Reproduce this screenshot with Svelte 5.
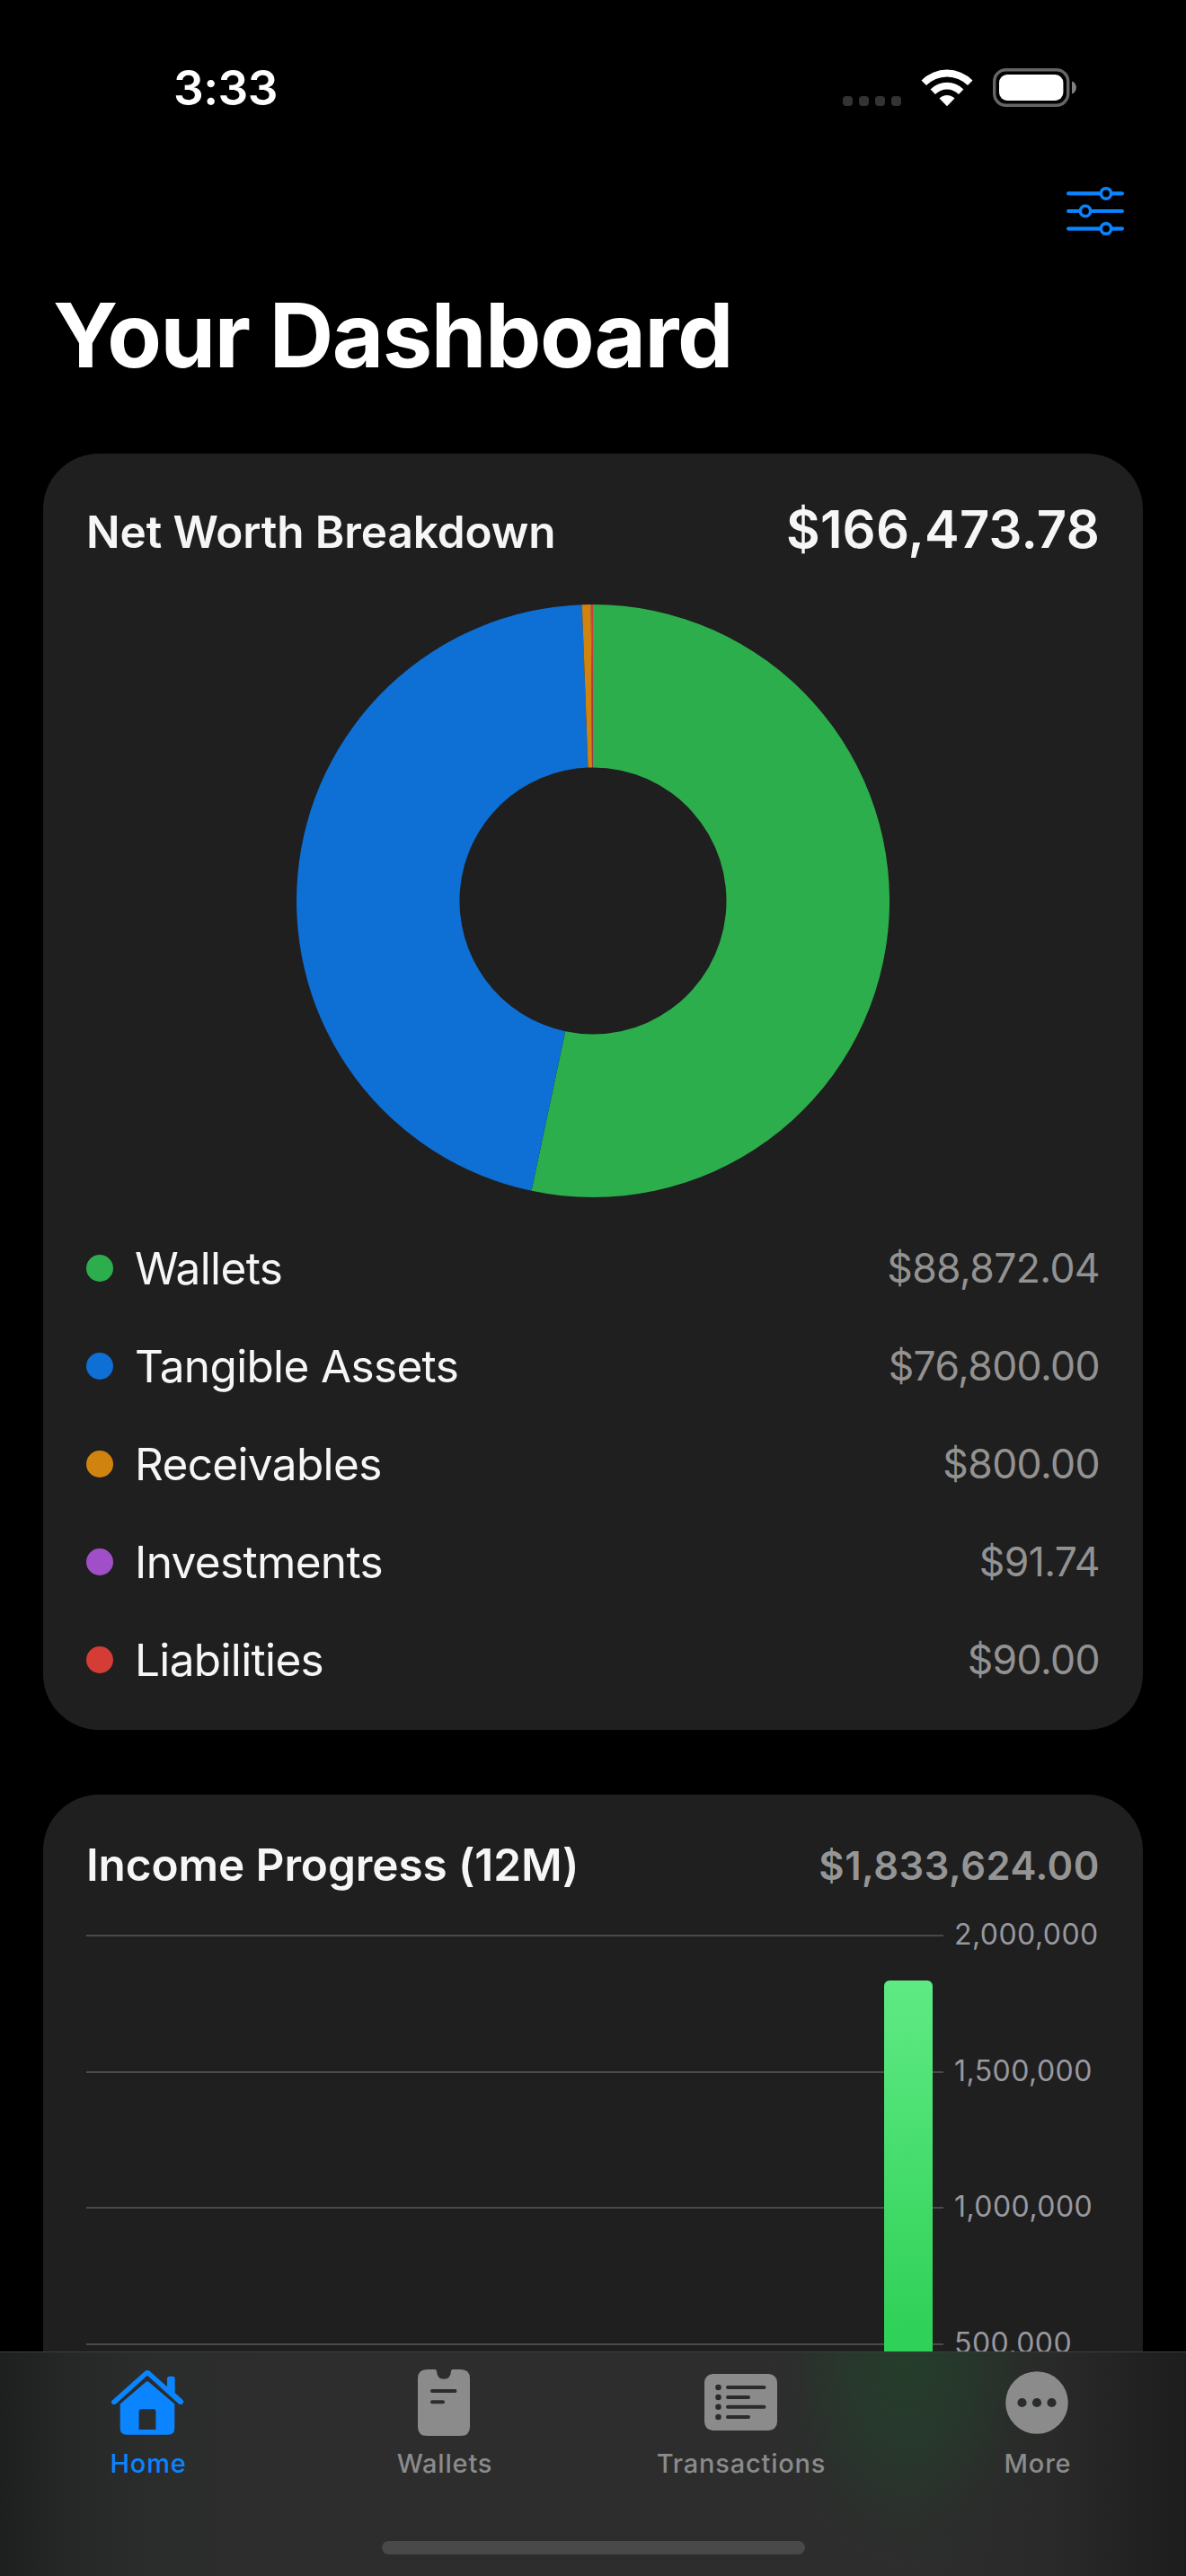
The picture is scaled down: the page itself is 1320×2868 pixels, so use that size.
<script>
  const slices = [
    { name: "Wallets", value: 88872.04, color: "#2dae4c" },
    { name: "Tangible Assets", value: 76800, color: "#0e6fd4" },
    { name: "Receivables", value: 800, color: "#d0830f" },
    { name: "Investments", value: 91.74, color: "#a04fc9" },
    { name: "Liabilities", value: 90, color: "#d33d36" },
  ];

  const income = 1833624;
  const axisMax = 2000000;
  const ticks = [2000000, 1500000, 1000000, 500000, 0];
  // only the last month has income
  const months = [0, 0, 0, 0, 0, 0, 0, 0, 0, 0, 0, income];

  const tabs = [
    { id: "home", label: "Home" },
    { id: "wallets", label: "Wallets" },
    { id: "transactions", label: "Transactions" },
    { id: "more", label: "More" },
  ];
  let active = $state("home");

  const money = (n) =>
    "$" + n.toLocaleString("en-US", { minimumFractionDigits: 2, maximumFractionDigits: 2 });

  const OUTER = 330;
  const INNER = 148.5;

  function point(r, angle) {
    return `${(OUTER + r * Math.sin(angle)).toFixed(2)} ${(OUTER - r * Math.cos(angle)).toFixed(2)}`;
  }

  function buildArcs(items) {
    const total = items.reduce((sum, s) => sum + s.value, 0);
    let start = 0;
    return items.map((s) => {
      const end = start + (s.value / total) * Math.PI * 2;
      const large = end - start > Math.PI ? 1 : 0;
      const d =
        `M${point(OUTER, start)} A${OUTER} ${OUTER} 0 ${large} 1 ${point(OUTER, end)} ` +
        `L${point(INNER, end)} A${INNER} ${INNER} 0 ${large} 0 ${point(INNER, start)} Z`;
      start = end;
      return { d, color: s.color };
    });
  }

  const arcs = buildArcs(slices);
</script>

<div class="screen">
  <div class="status">
    <span class="time">3:33</span>
    <div class="indicators">
      <div class="signal"><i></i><i></i><i></i><i></i></div>
      <svg class="wifi" width="58" height="43" viewBox="0 0 58 43">
        <path d="M0.5 13.5 A40 40 0 0 1 57.5 13.5 L52 19 A32.3 32.3 0 0 0 6 19 Z" fill="#fff" />
        <path d="M10.6 23.5 A26 26 0 0 1 47.4 23.5 L42 29 A18.4 18.4 0 0 0 16 29 Z" fill="#fff" />
        <path d="M20.5 33.5 A12 12 0 0 1 37.5 33.5 L29 42.2 Z" fill="#fff" />
      </svg>
      <svg class="battery" width="94" height="43" viewBox="0 0 94 43">
        <rect x="1.7" y="1.7" width="82" height="39.6" rx="13" fill="none" stroke="#666" stroke-width="3.4" />
        <rect x="7" y="7" width="71.4" height="29" rx="9" fill="#fff" />
        <path d="M88 14.5 C94.5 16.5 94.5 26.5 88 28.5 Z" fill="#808080" />
      </svg>
    </div>
  </div>

  <div class="toolbar">
    <svg width="64" height="56" viewBox="0 0 64 56" fill="none" stroke="#0a84ff" stroke-width="4.2" stroke-linecap="round">
      <path d="M2.1 8.4 H37 M51 8.4 H61.9 M2.1 28 H14 M28 28 H61.9 M2.1 47.6 H37 M51 47.6 H61.9" />
      <g stroke-width="3.6">
        <circle cx="44" cy="8.4" r="5.7" />
        <circle cx="21" cy="28" r="5.7" />
        <circle cx="44" cy="47.6" r="5.7" />
      </g>
    </svg>
  </div>

  <h1>Your Dashboard</h1>

  <main>
    <section class="card">
      <header class="worth">
        <h2>Net Worth Breakdown</h2>
        <strong>$166,473.78</strong>
      </header>

      <svg class="donut" width="660" height="660" viewBox="0 0 660 660">
        {#each arcs as arc}
          <path d={arc.d} fill={arc.color} />
        {/each}
      </svg>

      <ul>
        {#each slices as s}
          <li>
            <i class="dot" style="background: {s.color}"></i>
            <span class="name">{s.name}</span>
            <span class="amount">{money(s.value)}</span>
          </li>
        {/each}
      </ul>
    </section>

    <section class="card">
      <header>
        <h2>Income Progress (12M)</h2>
        <span class="total">{money(income)}</span>
      </header>

      <div class="chart">
        <div class="plot">
          {#each ticks as t}
            <div class="line"></div>
          {/each}
          <div class="bars">
            {#each months as m}
              <div class="bar" style="height: {(m / axisMax) * 100}%"></div>
            {/each}
          </div>
        </div>
        <div class="axis">
          {#each ticks as t}
            <span>{t.toLocaleString("en-US")}</span>
          {/each}
        </div>
      </div>
    </section>
  </main>

  <nav>
    <div class="tabs">
      {#each tabs as tab}
        <button class:active={active === tab.id} onclick={() => (active = tab.id)}>
          {#if tab.id === "home"}
            <svg width="82" height="76" viewBox="0 0 82 76" fill="currentColor">
              <path d="M3 34.5 L38 3.3 Q41 0.7 44 3.3 L63 20.2 V11.5 Q63 8.7 65.6 8.7 H69 Q71.7 8.7 71.7 11.5 V27 L80 34.5 Q82.5 37 80.2 39.2 Q78 41 75.5 39 L41 7.8 L6.5 39 Q4 41 1.8 39.2 Q-0.5 37 3 34.5 Z" />
              <path fill-rule="evenodd" d="M39 15.3 Q41 13.4 43 15.3 L71.3 39.5 V66.5 Q71.3 73.7 64 73.7 H18 Q10.7 73.7 10.7 66.5 V39.5 Z M34 45.3 Q31.6 45.3 31.6 47.7 V68 H50.4 V47.7 Q50.4 45.3 48 45.3 Z" />
            </svg>
          {:else if tab.id === "wallets"}
            <svg width="58" height="76" viewBox="0 0 58 76" fill="currentColor">
              <path fill-rule="evenodd" d="M10.5 1 H19 Q21 1 21 3 Q21.5 11.7 29 11.7 Q36.5 11.7 37 3 Q37 1 39 1 H47.5 Q58 1 58 11 V65 Q58 75 47.5 75 H10.5 Q0 75 0 65 V11 Q0 1 10.5 1 Z M16 23 A2 2 0 0 0 16 27 H41.5 A2 2 0 0 0 41.5 23 Z M16 35.3 A2 2 0 0 0 16 39.3 H28 A2 2 0 0 0 28 35.3 Z" />
            </svg>
          {:else if tab.id === "transactions"}
            <svg width="81" height="76" viewBox="0 0 81 76">
              <rect y="6" width="81" height="63" rx="9.5" fill="currentColor" />
              <g fill="#2b2b2b">
                {#each [21, 32, 42.8, 54] as y, i}
                  <circle cx="15.5" cy={y} r="3.3" />
                  <rect x="24" y={y - 2} width={i % 2 ? 27 : 44.5} height="4" rx="2" />
                {/each}
              </g>
            </svg>
          {:else}
            <svg width="70" height="76" viewBox="0 0 70 76">
              <circle cx="35" cy="38" r="34.8" fill="currentColor" />
              <g fill="#2a2e2b">
                <circle cx="18.5" cy="38" r="5.1" />
                <circle cx="35" cy="38" r="5.1" />
                <circle cx="51.5" cy="38" r="5.1" />
              </g>
            </svg>
          {/if}
          <span>{tab.label}</span>
        </button>
      {/each}
    </div>
    <div class="grabber"></div>
  </nav>
</div>

<style>
  :global(body) {
    margin: 0;
    background: #000;
  }

  .screen {
    position: relative;
    display: flex;
    flex-direction: column;
    width: 1320px;
    height: 2868px;
    overflow: hidden;
    background: #000;
    color: #f6f6f6;
    font-family: Inter, "Liberation Sans", sans-serif;
  }

  .status {
    flex: none;
    height: 195px;
    box-sizing: border-box;
    padding: 0 121px 0 193px;
    display: flex;
    align-items: center;
    justify-content: space-between;
  }

  .time {
    color: #fff;
    font-size: 53px;
    font-weight: 600;
    letter-spacing: -0.5px;
  }

  .indicators {
    display: flex;
    align-items: flex-end;
    margin-bottom: 1px;
  }

  .signal {
    display: flex;
    gap: 7px;
    margin: 0 22px 1px 0;
  }

  .signal i {
    width: 11px;
    height: 11px;
    border-radius: 4px;
    background: #333;
  }

  .wifi {
    margin-right: 22px;
  }

  .toolbar {
    flex: none;
    height: 80px;
    padding: 0 69px;
    display: flex;
    align-items: center;
    justify-content: flex-end;
  }

  h1 {
    flex: none;
    margin: 38px 59px 72px;
    color: #fff;
    font-size: 99px;
    line-height: 120px;
    font-weight: 700;
    letter-spacing: -1.4px;
  }

  main {
    display: flex;
    flex-direction: column;
    gap: 72px;
    padding: 0 48px;
  }

  .card {
    display: flex;
    flex-direction: column;
    padding: 48px;
    border-radius: 62px;
    background: #1f1f1f;
  }

  header {
    display: flex;
    align-items: center;
    justify-content: space-between;
    height: 61px;
  }

  header.worth {
    align-items: baseline;
    height: 72px;
    margin-bottom: 48px;
  }

  h2 {
    margin: 0;
    font-size: 49.5px;
    line-height: 61px;
    font-weight: 600;
    letter-spacing: -0.1px;
  }

  strong {
    font-size: 58px;
    line-height: 72px;
    font-weight: 600;
    letter-spacing: 0.2px;
  }

  .total {
    color: #959595;
    font-size: 43.5px;
    font-weight: 600;
    letter-spacing: 0.5px;
  }

  .donut {
    align-self: center;
    margin-bottom: 48px;
  }

  ul {
    list-style: none;
    margin: 0;
    padding: 0;
    display: flex;
    flex-direction: column;
    gap: 48px;
  }

  li {
    display: flex;
    align-items: center;
    height: 61px;
  }

  .dot {
    width: 30px;
    height: 30px;
    margin-right: 24px;
    border-radius: 50%;
  }

  .name {
    flex: 1;
    font-size: 49.5px;
    letter-spacing: -0.65px;
  }

  .amount {
    color: #929292;
    font-size: 44.5px;
    letter-spacing: -0.6px;
  }

  .chart {
    display: flex;
    gap: 12px;
    height: 608px;
    margin-top: 47px;
  }

  .plot {
    position: relative;
    width: 954px;
    display: flex;
    flex-direction: column;
    justify-content: space-between;
  }

  .line {
    height: 2px;
    background: #4a4a4b;
  }

  /* bars sit on top of the grid lines */
  .bars {
    position: absolute;
    inset: 1px 12px 1px 0;
    display: grid;
    grid-template-columns: repeat(12, 54px);
    justify-content: space-between;
    align-items: end;
  }

  .bar {
    border-radius: 6px 6px 0 0;
    background: linear-gradient(#5fea84, #30d158 70%);
  }

  .axis {
    display: flex;
    flex-direction: column;
    justify-content: space-between;
    margin: -20px 0 -18px;
    color: #98989f;
    font-size: 32px;
    line-height: 40px;
    letter-spacing: 0.45px;
  }

  nav {
    position: absolute;
    left: 0;
    right: 0;
    bottom: 0;
    height: 249px;
    border-top: 1px solid #3d3d3d;
    background:
      radial-gradient(ellipse 170px 250px at 1010px 10px, rgba(32, 72, 42, 0.6), rgba(32, 70, 43, 0.42) 40%, rgba(38, 54, 42, 0.15) 75%, rgba(42, 46, 42, 0) 100%),
      linear-gradient(90deg, #1e201f 0, #262827 75px, #2b2c2c 170px, #2d2d2d 300px, #2d2d2d 1020px, #292a29 1170px, #232323 1250px, #1c1d1c 1320px);
  }

  .tabs {
    display: grid;
    grid-template-columns: repeat(4, 1fr);
    padding: 18px 0 0;
  }

  button {
    display: flex;
    flex-direction: column;
    align-items: center;
    gap: 12px;
    padding: 0;
    border: 0;
    background: none;
    color: #8a8b8a;
    font: 500 29px/36px Inter, "Liberation Sans", sans-serif;
    letter-spacing: 0.8px;
  }

  button.active {
    color: #0a84ff;
  }

  button svg {
    margin-right: 2px;
  }

  .grabber {
    width: 471px;
    height: 15px;
    margin: 68px auto 0;
    border-radius: 8px;
    background: #494949;
  }
</style>
